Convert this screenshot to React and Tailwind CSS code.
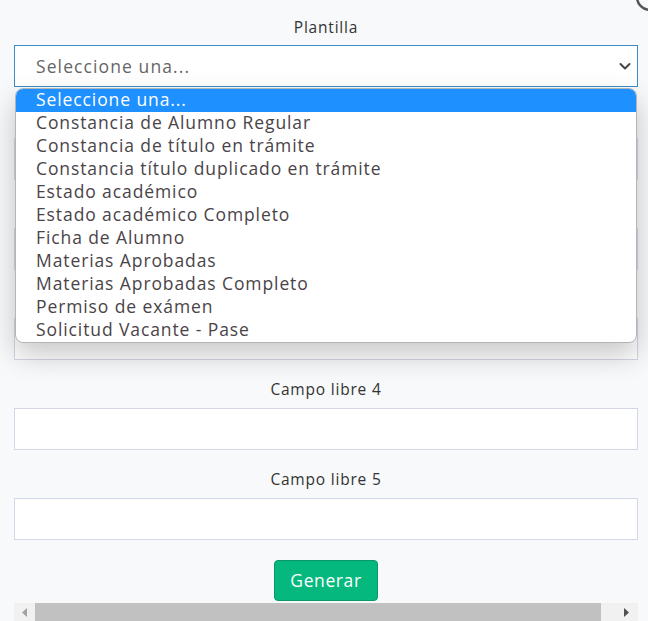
import React from 'react';

const opciones = [
  'Seleccione una...',
  'Constancia de Alumno Regular',
  'Constancia de título en trámite',
  'Constancia título duplicado en trámite',
  'Estado académico',
  'Estado académico Completo',
  'Ficha de Alumno',
  'Materias Aprobadas',
  'Materias Aprobadas Completo',
  'Permiso de exámen',
  'Solicitud Vacante - Pase',
];

// campos tapados por la lista desplegada: solo ocupan su lugar
const Campo = ({ label, first }) => (
  <div className={first ? 'mt-[21px]' : 'mt-[18px]'}>
    <div className="h-[22px] text-center text-[15.5px] leading-[22px] font-medium tracking-[0.8px] text-[#333] mb-[8px]">{label}</div>
    <div className="h-[42px] bg-white border border-[#d3d6e6]" />
  </div>
);

export default function App() {
  return (
    <div
      className="relative min-h-[621px] bg-[#f8f9fa] pl-[14px] pr-[10px] pt-[16px] overflow-hidden"
      style={{ fontFamily: '"Open Sans", "Noto Sans", sans-serif' }}
    >
      {/* boton cerrar cortado arriba a la derecha */}
      <svg className="absolute right-0 top-0" width="14" height="14" viewBox="0 0 14 14">
        <circle cx="16" cy="-3" r="13" fill="none" stroke="#555" strokeWidth="2.5" />
      </svg>

      <div className="text-center text-[15.5px] leading-[22px] font-medium tracking-[0.8px] text-[#333] mb-[7px]">Plantilla</div>
      <div className="relative">
        <div className="h-[42px] bg-white border border-[#3a8dc5] flex items-center justify-between pl-[21px] pr-[5px]">
          <span className="text-[17.5px] tracking-[1.1px] text-[#666]">Seleccione una...</span>
          <svg width="14" height="14" viewBox="0 0 14 14">
            <path d="M2.5 5l4.5 4.5L11.5 5" fill="none" stroke="#444" strokeWidth="2" strokeLinecap="round" strokeLinejoin="round" />
          </svg>
        </div>

        {/* lista desplegada */}
        <div className="absolute left-[1px] right-[1px] top-[43px] z-10 bg-white rounded-[8px] border border-[#b5b5b5] shadow-[0_12px_28px_rgba(0,0,0,0.22)] overflow-hidden">
          {opciones.map((o, i) => (
            <div
              key={o}
              className={
                'h-[23px] pl-[20px] text-[17.5px] tracking-[0.9px] leading-[21px] ' +
                (i === 0 ? 'bg-[#1e90ff] text-white' : 'text-[#4a4448]')
              }
            >
              {o}
            </div>
          ))}
        </div>
      </div>

      <Campo first />
      <Campo />
      <Campo />
      <Campo label="Campo libre 4" />
      <Campo label="Campo libre 5" />

      <div className="flex justify-center mt-[20px]">
        <button className="h-[41px] px-[15px] bg-[#04b87e] border border-[#0a9966] rounded-[4px] text-white text-[17.5px] tracking-[0.6px]">
          Generar
        </button>
      </div>

      {/* barra de desplazamiento horizontal */}
      <div className="mt-[2px] h-[18px] bg-[#f1f1f1] flex items-stretch">
        <div className="w-[21px] flex items-center justify-center">
          <svg width="6" height="9" viewBox="0 0 6 9"><path d="M5 0v9L0 4.5z" fill="#a3a3a3" /></svg>
        </div>
        <div className="w-[566px] bg-[#c1c1c1]" />
        <div className="flex-1 flex items-center justify-end pr-[8px]">
          <svg width="6" height="9" viewBox="0 0 6 9"><path d="M0 0v9l5-4.5z" fill="#505050" /></svg>
        </div>
      </div>
    </div>
  );
}
